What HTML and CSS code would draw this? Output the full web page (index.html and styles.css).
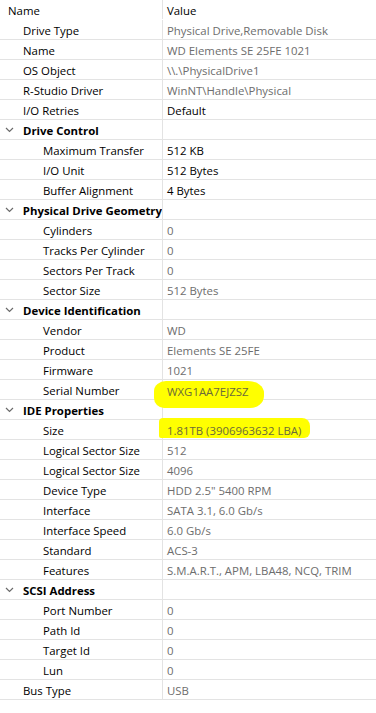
FILE: index.html
```html
<!DOCTYPE html>
<html>
<head>
<meta charset="utf-8">
<link rel="stylesheet" href="styles.css">
</head>
<body>
<div class="grid">
  <div class="row head"><div class="name l0">Name</div><div class="val dark">Value</div></div>
  <div class="row"><div class="name l1">Drive Type</div><div class="val">Physical Drive,Removable Disk</div></div>
  <div class="row"><div class="name l1">Name</div><div class="val">WD Elements SE 25FE 1021</div></div>
  <div class="row"><div class="name l1">OS Object</div><div class="val">\\.\PhysicalDrive1</div></div>
  <div class="row"><div class="name l1">R-Studio Driver</div><div class="val">WinNT\Handle\Physical</div></div>
  <div class="row"><div class="name l1">I/O Retries</div><div class="val dark">Default</div></div>

  <div class="row"><div class="name grp"><span class="chev"><svg width="9" height="6" viewBox="0 0 9 6"><path d="M1 1 L4.5 4.5 L8 1" fill="none" stroke="#6a6a6a" stroke-width="1.2"/></svg></span>Drive Control</div><div class="val"></div></div>
  <div class="row"><div class="name l2">Maximum Transfer</div><div class="val dark">512 KB</div></div>
  <div class="row"><div class="name l2">I/O Unit</div><div class="val dark">512 Bytes</div></div>
  <div class="row"><div class="name l2">Buffer Alignment</div><div class="val dark">4 Bytes</div></div>

  <div class="row"><div class="name grp"><span class="chev"><svg width="9" height="6" viewBox="0 0 9 6"><path d="M1 1 L4.5 4.5 L8 1" fill="none" stroke="#6a6a6a" stroke-width="1.2"/></svg></span>Physical Drive Geometry</div><div class="val"></div></div>
  <div class="row"><div class="name l2">Cylinders</div><div class="val">0</div></div>
  <div class="row"><div class="name l2">Tracks Per Cylinder</div><div class="val">0</div></div>
  <div class="row"><div class="name l2">Sectors Per Track</div><div class="val">0</div></div>
  <div class="row"><div class="name l2">Sector Size</div><div class="val">512 Bytes</div></div>

  <div class="row"><div class="name grp"><span class="chev"><svg width="9" height="6" viewBox="0 0 9 6"><path d="M1 1 L4.5 4.5 L8 1" fill="none" stroke="#6a6a6a" stroke-width="1.2"/></svg></span>Device Identification</div><div class="val"></div></div>
  <div class="row"><div class="name l2">Vendor</div><div class="val">WD</div></div>
  <div class="row"><div class="name l2">Product</div><div class="val">Elements SE 25FE</div></div>
  <div class="row"><div class="name l2">Firmware</div><div class="val">1021</div></div>
  <div class="row"><div class="name l2">Serial Number</div><div class="val"><span class="hl hl1">WXG1AA7EJZSZ</span></div></div>

  <div class="row"><div class="name grp"><span class="chev"><svg width="9" height="6" viewBox="0 0 9 6"><path d="M1 1 L4.5 4.5 L8 1" fill="none" stroke="#6a6a6a" stroke-width="1.2"/></svg></span>IDE Properties</div><div class="val"></div></div>
  <div class="row"><div class="name l2">Size</div><div class="val"><span class="hl hl2">1.81TB (3906963632 LBA)</span></div></div>
  <div class="row"><div class="name l2">Logical Sector Size</div><div class="val">512</div></div>
  <div class="row"><div class="name l2">Logical Sector Size</div><div class="val">4096</div></div>
  <div class="row"><div class="name l2">Device Type</div><div class="val">HDD 2.5" 5400 RPM</div></div>
  <div class="row"><div class="name l2">Interface</div><div class="val">SATA 3.1, 6.0 Gb/s</div></div>
  <div class="row"><div class="name l2">Interface Speed</div><div class="val">6.0 Gb/s</div></div>
  <div class="row"><div class="name l2">Standard</div><div class="val">ACS-3</div></div>
  <div class="row"><div class="name l2">Features</div><div class="val">S.M.A.R.T., APM, LBA48, NCQ, TRIM</div></div>

  <div class="row"><div class="name grp"><span class="chev"><svg width="9" height="6" viewBox="0 0 9 6"><path d="M1 1 L4.5 4.5 L8 1" fill="none" stroke="#6a6a6a" stroke-width="1.2"/></svg></span>SCSI Address</div><div class="val"></div></div>
  <div class="row"><div class="name l2">Port Number</div><div class="val">0</div></div>
  <div class="row"><div class="name l2">Path Id</div><div class="val">0</div></div>
  <div class="row"><div class="name l2">Target Id</div><div class="val">0</div></div>
  <div class="row"><div class="name l2">Lun</div><div class="val">0</div></div>
  <div class="row"><div class="name l1">Bus Type</div><div class="val">USB</div></div>
</div>
</body>
</html>
```

FILE: styles.css
```css
html, body {
  margin: 0;
  padding: 0;
  background: #ffffff;
}
body {
  font-family: "Open Sans", "Noto Sans", sans-serif;
  font-size: 11.4px;
  color: #000;
}
.grid {
  display: flex;
  flex-direction: column;
  width: 376px;
}
.row {
  display: flex;
  height: 20px;
  box-sizing: border-box;
  border-bottom: 1px solid #e3e3e3;
  line-height: 17px;
}
.row.head {
  border-bottom: 1px solid #ffffff;
}
.name {
  width: 163px;
  flex: none;
  box-sizing: border-box;
  border-right: 1px solid #e3e3e3;
  white-space: nowrap;
  overflow: hidden;
  display: flex;
  align-items: center;
  padding-top: 2px;
}
.l0 { padding-left: 8px; }
.l1 { padding-left: 23px; }
.l2 { padding-left: 43px; }
.grp {
  padding-left: 5px;
  font-weight: 700;
}
.chev {
  width: 18px;
  display: flex;
  align-items: center;
  padding-bottom: 1px;
}
.val {
  flex: 1;
  padding-left: 4px;
  padding-top: 2px;
  color: #6d6d6d;
  white-space: nowrap;
  display: flex;
  align-items: center;
}
.val.dark { color: #000; }
.hl {
  background: #ffff00;
  color: #6b6b3a;
  line-height: 14px;
  position: relative;
  z-index: 1;
}
.hl1 {
  margin-left: -13px;
  margin-top: 7px;
  padding: 4px 16px 9px 13px;
  border-radius: 12px 16px 14px 10px / 10px 12px 12px 10px;
}
.hl2 {
  margin-left: -8px;
  margin-bottom: 5px;
  padding: 6px 9px 0 8px;
  border-radius: 4px 8px 6px 2px;
}
```
